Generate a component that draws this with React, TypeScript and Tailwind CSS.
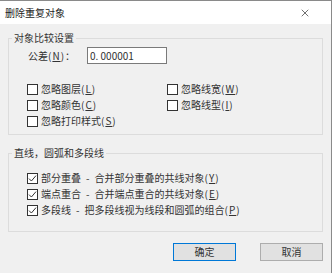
import { X } from 'lucide-react';

const font = { fontFamily: '"Noto Sans CJK SC", "Noto Sans", sans-serif' };

const Box = ({ checked }: { checked?: boolean }) => (
    <span className="flex h-[11px] w-[11px] shrink-0 items-center justify-center border border-[#333333] bg-white">
        {checked && (
            <svg width="9" height="9" viewBox="0 0 9 9" fill="none">
                <path d="M1 4.6 L3.4 7 L8 1.6" stroke="#333333" strokeWidth="1" />
            </svg>
        )}
    </span>
);

const Hot = ({ k }: { k: string }) => (
    <span className="tracking-[1px]">
        (<span className="underline">{k}</span>)
    </span>
);

const Check = ({ label, desc, hot, checked }: { label: string; desc?: string; hot: string; checked?: boolean }) => (
    <div className="flex h-[16px] items-center gap-[3px]">
        <Box checked={checked} />
        <span className="whitespace-nowrap">
            {label}
            {desc && (
                <>
                    <span className="mx-[5px]">-</span>
                    {desc}
                </>
            )}
            <Hot k={hot} />
        </span>
    </div>
);

export default function App() {
    return (
        <div className="h-[273px] w-[332px] bg-[#f0f0f0] text-[10px] leading-[14px] text-[#333333] select-none" style={font}>
            <div className="flex h-[24px] items-center justify-between border-t border-r border-[#8a8a8a] bg-white pl-[5px] pr-[20px]">
                <span className="text-[10px] text-[#222222]">删除重复对象</span>
                <X size={12} strokeWidth={1.3} className="text-[#222222]" />
            </div>

            <div className="flex h-[249px] flex-col border-r border-[#8a8a8a] px-[8px]">
                <fieldset className="mt-[7px] h-[104px] border border-[#dcdcdc] pl-[18px]">
                    <legend className="-ml-[15px] px-[2px]">对象比较设置</legend>
                    <div className="mt-[2px] flex h-[17px] items-center">
                        <span className="w-[60px] pl-[1px] whitespace-nowrap">
                            公差<Hot k="N" />：
                        </span>
                        <div className="flex h-[17px] w-[80px] items-center border border-[#7a7a7a] bg-white pl-[2px]">
                            0. 000001
                        </div>
                    </div>
                    <div className="mt-[17px] grid grid-cols-[140px_1fr]">
                        <Check label="忽略图层" hot="L" />
                        <Check label="忽略线宽" hot="W" />
                        <Check label="忽略颜色" hot="C" />
                        <Check label="忽略线型" hot="I" />
                        <Check label="忽略打印样式" hot="S" />
                    </div>
                </fieldset>

                <fieldset className="mt-[11px] h-[86px] border border-[#dcdcdc] pl-[18px]">
                    <legend className="-ml-[15px] px-[2px]">直线，圆弧和多段线</legend>
                    <div className="mt-[10px] flex flex-col">
                        <Check checked label="部分重叠" desc="合并部分重叠的共线对象" hot="Y" />
                        <Check checked label="端点重合" desc="合并端点重合的共线对象" hot="E" />
                        <Check checked label="多段线" desc="把多段线视为线段和圆弧的组合" hot="P" />
                    </div>
                </fieldset>

                <div className="mt-[11px] flex justify-end gap-[24px]">
                    <button className="h-[18px] w-[63px] border border-[#0078d7] bg-[#e1e1e1] text-[10px] leading-none text-[#333333]">
                        确定
                    </button>
                    <button className="h-[18px] w-[63px] border border-[#adadad] bg-[#e1e1e1] text-[10px] leading-none text-[#333333]">
                        取消
                    </button>
                </div>
            </div>
        </div>
    );
}
